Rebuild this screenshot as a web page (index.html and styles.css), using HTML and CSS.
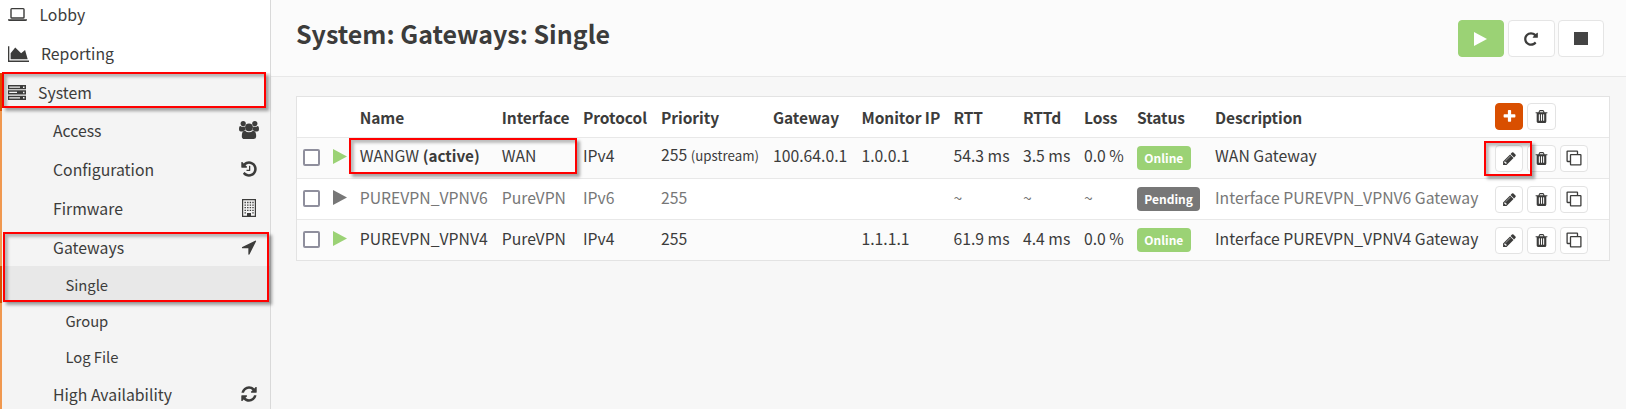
FILE: index.html
```
<!DOCTYPE html>
<html lang="en">
<head>
<meta charset="utf-8">
<title>System: Gateways: Single</title>
<link rel="stylesheet" href="styles.css">
</head>
<body>
<svg class="defs" width="0" height="0">
  <symbol id="i-trash" viewBox="0 0 1792 1792"><path d="M704 1376v-704q0-14-9-23t-23-9h-64q-14 0-23 9t-9 23v704q0 14 9 23t23 9h64q14 0 23-9t9-23zm256 0v-704q0-14-9-23t-23-9h-64q-14 0-23 9t-9 23v704q0 14 9 23t23 9h64q14 0 23-9t9-23zm256 0v-704q0-14-9-23t-23-9h-64q-14 0-23 9t-9 23v704q0 14 9 23t23 9h64q14 0 23-9t9-23zm-544-992h448l-48-117q-7-9-17-11h-317q-10 2-17 11zm928 32v64q0 14-9 23t-23 9h-96v948q0 83-47 143.500t-113 60.500h-832q-66 0-113-58.500t-47-141.500v-952h-96q-14 0-23-9t-9-23v-64q0-14 9-23t23-9h309l70-167q15-37 54-63t79-26h320q40 0 79 26t54 63l70 167h309q14 0 23 9t9 23z"/></symbol>
  <symbol id="i-pencil" viewBox="0 0 1792 1792"><path d="M491 1536l91-91-235-235-91 91v107h128v128h107zm523-928q0-22-22-22-10 0-17 7l-542 542q-7 7-7 17 0 22 22 22 10 0 17-7l542-542q7-7 7-17zm-54-192l416 416-832 832h-416v-416zm683 96q0 53-37 90l-166 166-416-416 166-165q36-38 90-38 53 0 91 38l235 234q37 39 37 91z"/></symbol>
  <symbol id="i-clone" viewBox="0 0 16 16"><path fill="none" stroke="currentColor" stroke-width="1.300" d="M5 4.600h9.400a.5.5 0 0 1 .5.5v9.300a.5.5 0 0 1-.5.5H5a.5.5 0 0 1-.5-.5V5.100a.5.500 0 0 1 .5-.5zM4.500 11.500H1.600a.5.500 0 0 1-.5-.5V1.600a.5.500 0 0 1 .5-.5H11a.5.500 0 0 1 .5.5v3"/></symbol>
  <symbol id="i-plus" viewBox="0 0 1792 1792"><path d="M1600 736v192q0 40-28 68t-68 28h-416v416q0 40-28 68t-68 28h-192q-40 0-68-28t-28-68v-416h-416q-40 0-68-28t-28-68v-192q0-40 28-68t68-28h416v-416q0-40 28-68t68-28h192q40 0 68 28t28 68v416h416q40 0 68 28t28 68z"/></symbol>
  <symbol id="i-play" viewBox="0 0 14 15" preserveAspectRatio="none"><path d="M0 0L14 7.500 0 15z"/></symbol>
</svg>
<div class="app">
  <nav class="side">
    <a class="item top lobby"><svg class="lead" width="19" height="13" viewBox="0 0 19 13"><path fill-rule="evenodd" d="M3.800 0h11.400a1.500 1.500 0 0 1 1.500 1.500v7.700a1.500 1.500 0 0 1-1.500 1.500H3.800a1.500 1.500 0 0 1-1.500-1.500V1.500A1.500 1.500 0 0 1 3.800 0zm-.1 1.300v8h11.600v-8zM0 11.200h19v.8q0 1-1.500 1h-16Q0 13 0 12z"/></svg><span>Lobby</span></a>
    <a class="item top reporting"><svg class="lead" width="21" height="16" viewBox="0 128 2048 1536"><path d="M2048 1536v128h-2048v-1536h128v1408h1920zm-384-1024l256 896h-1664v-576l448-576 576 576z"/></svg><span>Reporting</span></a>
    <a class="item top system"><svg class="lead" width="18" height="15" viewBox="0 0 18 15"><path fill-rule="evenodd" d="M0 0h18v4.300H0zM1.200 1.500v1.300H12V1.500zM15 1.400v1.500h1.500V1.400zM0 5.300h18v4.300H0zM1.200 6.800v1.300H9V6.800zM15 6.700v1.500h1.500V6.700zM0 10.700h18V15H0zM1.200 12.200v1.300H12v-1.300zM15 12.100v1.500h1.500v-1.500z"/></svg><span>System</span></a>
    <a class="item sub"><span>Access</span><svg class="trail wide" width="20" height="18" viewBox="0 0 20 18"><circle cx="4.200" cy="2.600" r="2.600"/><circle cx="15.800" cy="2.600" r="2.600"/><path d="M0 8.300Q0 4.900 1.400 4.900q1 .9 2.800.9.800 0 1.600-.3-.1 2 1 3.800-1.600 0-2.900 1.300H1.800Q0 10.600 0 8.300zM20 8.300q0-3.400-1.400-3.400-1 .9-2.800.9-.8 0-1.600-.3.100 2-1 3.800 1.600 0 2.900 1.300h2.100q1.800 0 1.800-2.300z"/><circle cx="10" cy="6.300" r="3.900"/><path d="M2.800 15.200q0-5.400 3.200-5.400 1.700 1.500 4 1.500t4-1.500q3.200 0 3.200 5.400 0 2.800-2.600 2.800H5.400q-2.600 0-2.600-2.800z"/></svg></a>
    <a class="item sub"><span>Configuration</span><svg class="trail" width="18" height="18" viewBox="0 0 1792 1792"><path d="M1664 896q0 156-61 298t-164 245-245 164-298 61q-172 0-327-72.500t-264-204.500q-7-10-6.500-22.500t8.500-20.500l137-138q10-9 25-9 16 2 23 12 73 95 179 147t225 52q104 0 198.500-40.500t163.500-109.500 109.500-163.500 40.500-198.500-40.500-198.500-109.500-163.500-163.500-109.500-198.500-40.500q-98 0-188 35.500t-160 101.500l137 138q31 30 14 69-17 40-59 40h-448q-26 0-45-19t-19-45v-448q0-42 40-59 39-17 69 14l130 129q107-101 244.500-156.500t284.500-55.500q156 0 298 61t245 164 164 245 61 298zm-640-288v448q0 14-9 23t-23 9h-320q-14 0-23-9t-9-23v-64q0-14 9-23t23-9h224v-352q0-14 9-23t23-9h64q14 0 23 9t9 23z"/></svg></a>
    <a class="item sub"><span>Firmware</span><svg class="trail" width="14" height="18" viewBox="0 0 14 18"><path fill-rule="evenodd" d="M0 0h14v18H0zM1.200 1.200v15.600H5V14h4v2.800h3.800V1.200z"/><path fill="none" stroke="currentColor" stroke-width="1.300" stroke-dasharray="1.400 1.200" d="M2.500 3.500h9.400M2.500 6.100h9.400M2.500 8.700h9.400M2.500 11.300h9.400"/><path d="M2.500 13.300h1.400v1.300H2.500zM10.300 13.300h1.400v1.300h-1.400z"/></svg></a>
    <a class="item sub gateways"><span>Gateways</span><svg class="trail" width="18" height="18" viewBox="0 0 1792 1792"><path d="M1593 349l-640 1280q-17 35-57 35-5 0-15-2-22-5-35.500-22.500t-13.500-39.500v-576h-576q-22 0-39.500-13.500t-22.500-35.500 4-42 29-30l1280-640q13-7 29-7 27 0 45 19 15 14 18.500 34.500t-6.500 39.500z"/></svg></a>
    <a class="item leaf active"><span>Single</span></a>
    <a class="item leaf"><span>Group</span></a>
    <a class="item leaf"><span>Log File</span></a>
    <a class="item sub last"><span>High Availability</span><svg class="trail" width="18" height="18" viewBox="0 0 1792 1792"><path d="M1639 1056q0 5-1 7-64 268-268 434.500t-478 166.500q-146 0-282.500-55t-243.500-157l-129 129q-19 19-45 19t-45-19-19-45v-448q0-26 19-45t45-19h448q26 0 45 19t19 45-19 45l-137 137q71 66 161 102t187 36q134 0 250-65t186-179q11-17 53-117 8-23 30-23h192q13 0 22.500 9.500t9.500 22.500zm25-800v448q0 26-19 45t-45 19h-448q-26 0-45-19t-19-45 19-45l138-138q-148-137-349-137-134 0-250 65t-186 179q-11 17-53 117-8 23-30 23h-199q-13 0-22.500-9.500t-9.500-22.500v-7q65-268 270-434.500t480-166.500q146 0 284 55.500t245 156.500l130-129q19-19 45-19t45 19 19 45z"/></svg></a>
  </nav>
  <main class="main">
    <header class="head">
      <h1>System: Gateways: Single</h1>
      <div class="actions">
        <button class="act go"><svg width="13" height="14"><use href="#i-play"/></svg></button>
        <button class="act"><svg width="16" height="16" viewBox="0 0 1792 1792"><path d="M1664 256v448q0 26-19 45t-45 19h-448q-42 0-59-40-17-39 14-69l138-138q-148-137-349-137-104 0-198.500 40.500t-163.500 109.500-109.500 163.500-40.500 198.500 40.500 198.500 109.500 163.500 163.500 109.500 198.500 40.500q119 0 225-52t179-147q7-10 23-12 15 0 25 9l137 138q9 8 9.500 20.500t-7.500 22.500q-109 132-264 204.500t-327 72.500q-156 0-298-61t-245-164-164-245-61-298 61-298 164-245 245-164 298-61q147 0 284.500 55.500t244.500 156.500l130-129q29-31 70-14 39 17 39 59z"/></svg></button>
        <button class="act"><i class="stop"></i></button>
      </div>
    </header>
    <section class="table">
      <div class="row th">
        <b></b><b></b><b>Name</b><b>Interface</b><b>Protocol</b><b>Priority</b><b>Gateway</b><b>Monitor IP</b><b>RTT</b><b>RTTd</b><b>Loss</b><b>Status</b><b>Description</b>
        <div class="btns"><button class="add"><svg><use href="#i-plus"/></svg></button><button><svg><use href="#i-trash"/></svg></button></div>
      </div>
      <div class="row odd first">
        <i class="check"></i><svg class="state"><use href="#i-play"/></svg><span>WANGW <b>(active)</b></span><span>WAN</span><span>IPv4</span><span>255 <small>(upstream)</small></span><span>100.64.0.1</span><span>1.0.0.1</span><span>54.3 ms</span><span>3.5 ms</span><span>0.0 %</span><em class="tag">Online</em><span>WAN Gateway</span>
        <div class="btns"><button><svg><use href="#i-pencil"/></svg></button><button><svg><use href="#i-trash"/></svg></button><button><svg class="cl"><use href="#i-clone"/></svg></button></div>
      </div>
      <div class="row muted">
        <i class="check"></i><svg class="state"><use href="#i-play"/></svg><span>PUREVPN_VPNV6</span><span>PureVPN</span><span>IPv6</span><span>255</span><span></span><span></span><span>~</span><span>~</span><span>~</span><em class="tag">Pending</em><span>Interface PUREVPN_VPNV6 Gateway</span>
        <div class="btns"><button><svg><use href="#i-pencil"/></svg></button><button><svg><use href="#i-trash"/></svg></button><button><svg class="cl"><use href="#i-clone"/></svg></button></div>
      </div>
      <div class="row odd">
        <i class="check"></i><svg class="state"><use href="#i-play"/></svg><span>PUREVPN_VPNV4</span><span>PureVPN</span><span>IPv4</span><span>255</span><span></span><span>1.1.1.1</span><span>61.9 ms</span><span>4.4 ms</span><span>0.0 %</span><em class="tag">Online</em><span>Interface PUREVPN_VPNV4 Gateway</span>
        <div class="btns"><button><svg><use href="#i-pencil"/></svg></button><button><svg><use href="#i-trash"/></svg></button><button><svg class="cl"><use href="#i-clone"/></svg></button></div>
      </div>
    </section>
  </main>
</div>
<div class="mark m-system"></div>
<div class="mark m-gateways"></div>
<div class="mark m-wan"></div>
<div class="mark m-edit"></div>
</body>
</html>
```
FILE: styles.css
```
* { box-sizing: border-box; }
body { margin: 0; width: 1626px; height: 409px; overflow: hidden; position: relative; background: #f7f7f7; color: #3c3c3b; font: 15.800px/24px "Noto Sans CJK SC", "Noto Sans", sans-serif; }
svg { fill: currentColor; display: block; flex: none; }
.defs { position: absolute; }
button { margin: 0; padding: 0; font: inherit; color: inherit; }
.app { display: flex; height: 409px; }

.side { width: 271px; flex: none; height: 409px; overflow: hidden; background: #f4f4f4; border-right: 1px solid #d9d9d9; }
.item { display: flex; align-items: center; justify-content: space-between; height: 38.700px; padding: 0 12.500px 0 51px; border-left: 2px solid #f0984f; }
.item span { white-space: nowrap; padding-top: 2px; }
.top { justify-content: flex-start; padding-left: 6px; background: #fff; border-left-color: #fff; }
.lobby { height: 34px; padding-bottom: 5px; }
.lobby span { margin-left: 12.500px; padding-top: 1px; }
.reporting { height: 39px; }
.reporting span { margin-left: 12px; padding-top: 1px; }
.system { height: 38px; background: #f4f4f4; border-left-color: #d94f00; }
.system span { margin-left: 12px; }
.trail { width: 18px; }
.wide { width: 20px; margin-right: -1px; }
.gateways { padding-top: 1px; }
.leaf { height: 36px; padding-left: 63.400px; font-size: 14.800px; }
.leaf span { padding-top: 0; }
.active { height: 37.500px; background: #e8e8e8; border-left-color: #d94f00; }
.last { height: 37.500px; }

.main { flex: 1; min-width: 0; }
.head { display: flex; justify-content: space-between; align-items: flex-start; height: 77px; padding: 20px 22px 0 25px; background: #fbfbfb; border-bottom: 1px solid #e8e8e8; }
h1 { margin: -3px 0 0; font-size: 25px; line-height: 32px; font-weight: 700; }
.actions { display: flex; gap: 3px; }
.act { display: flex; align-items: center; justify-content: center; width: 46.500px; height: 37px; border: 1px solid #e5e5e5; border-radius: 4px; background: #fff; }
.go { margin-right: 1px; background: #9bd275; border-color: #9bd275; color: #fff; }
.stop { width: 14px; height: 13px; background: #444; }

.table { margin: 19px 16px 0 25px; border: 1px solid #e3e3e3; background: #fff; }
.row { display: grid; grid-template-columns: 29.500px 27.200px 142px 81.300px 78px 112px 88.500px 92px 69.500px 61px 53px 78px 280px 94px; height: 41px; padding: 0 6px; white-space: nowrap; align-items: center; }
.row + .row { border-top: 1px solid #e8e8e8; }
.row > span { padding-bottom: 3px; font-size: 15.750px; }
.first > span { padding-bottom: 5px; }
.th.row { height: 40px; }
.odd { background: #fbfbfb; }
.muted { color: #777; }
.th b { font-weight: 700; font-size: 15.500px; letter-spacing: -0.05px; }
.row span b { font-weight: 700; font-size: 15.300px; }
.row small { font-size: 13.300px; }
.check { width: 17px; height: 17px; margin-bottom: 2px; border: 2px solid #8f8f9d; border-radius: 2px; background: #fff; }
.state { width: 14px; height: 15px; margin-bottom: 4px; color: #9bd275; }
.muted .state { color: #777; }
.tag { justify-self: start; height: 24px; padding: 0 7.300px; border-radius: 4px; background: #9bd275; color: #fff; font: 700 12px/23px "Noto Sans CJK SC", sans-serif; }
.muted .tag { background: #777; }
.btns { display: flex; gap: 4px; }
.btns button { display: flex; align-items: center; justify-content: center; width: 28.300px; height: 27px; border: 1px solid #e3e3e3; border-radius: 4px; background: #fff; color: #3c3c3b; }
.th .btns { margin-top: -1px; }
.btns svg { width: 15px; height: 15px; }
.btns .cl { width: 16px; height: 16px; }
.btns .add { background: #d94f00; border-color: #d94f00; color: #fff; }

/* annotation frames drawn over the page */
.mark { position: absolute; border: 2px solid #f00; box-shadow: 3px 3px 3px rgba(0,0,0,.35), inset 3px 3px 3px rgba(0,0,0,.25); }
.m-system { left: 2px; top: 72px; width: 264px; height: 36px; }
.m-gateways { left: 3px; top: 232px; width: 266px; height: 70px; }
.m-wan { left: 349px; top: 138px; width: 228px; height: 36px; }
.m-edit { left: 1484px; top: 141px; width: 48px; height: 35px; }
```
